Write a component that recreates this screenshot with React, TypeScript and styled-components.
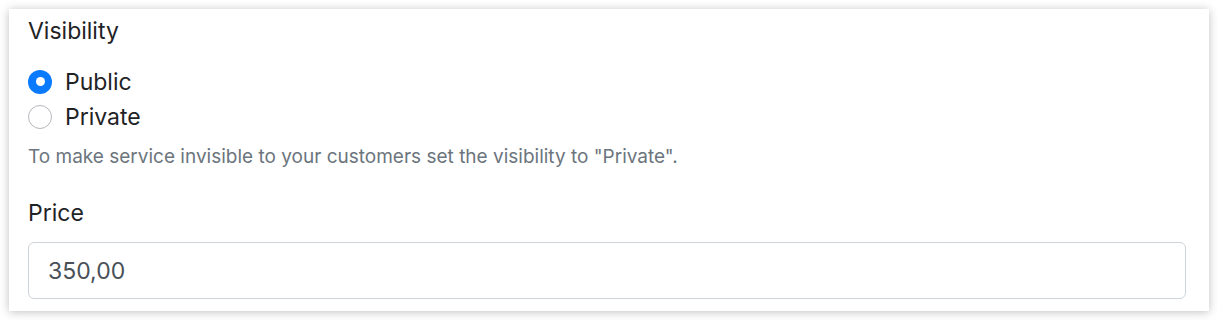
import React, { useState } from 'react'
import styled, { createGlobalStyle } from 'styled-components'

const GlobalStyle = createGlobalStyle`
    body {
        margin: 0;
        background: #ffffff;
        font-family: Inter, "Liberation Sans", sans-serif;
        color: #1f2326;
    }
`

const Page = styled.div`
    padding: 9px;
`

const Card = styled.div`
    width: 1200px;
    box-sizing: border-box;
    background: #ffffff;
    box-shadow: 0 1px 9px rgba(0, 0, 0, 0.25);
    padding: 6px 23px 12px 19px;
`

const Label = styled.div<{ $gap?: number }>`
    font-size: 23px;
    line-height: 33px;
    margin-top: ${p => p.$gap || 0}px;
`

const RadioList = styled.div`
    display: flex;
    flex-direction: column;
    margin-top: 16px;
`

const RadioRow = styled.label`
    display: flex;
    align-items: center;
    gap: 13px;
    height: 35px;
    font-size: 23px;
    cursor: pointer;
`

const RadioDot = styled.span<{ $checked: boolean }>`
    width: 24px;
    height: 24px;
    box-sizing: border-box;
    border-radius: 50%;
    flex-shrink: 0;
    background: ${p => (p.$checked ? '#0a7aff' : '#ffffff')};
    border: ${p => (p.$checked ? 'none' : '1.5px solid #b4b8bd')};
    display: flex;
    align-items: center;
    justify-content: center;
    &::after {
        content: '';
        width: 9px;
        height: 9px;
        border-radius: 50%;
        background: #ffffff;
        display: ${p => (p.$checked ? 'block' : 'none')};
    }
`

const HelpText = styled.div`
    font-size: 19px;
    line-height: 27px;
    color: #6c757d;
    margin-top: 9px;
`

const Input = styled.input`
    display: block;
    width: 100%;
    box-sizing: border-box;
    height: 57px;
    margin-top: 12px;
    padding: 0 19px;
    border: 1px solid #ced4da;
    border-radius: 6px;
    font-family: inherit;
    font-size: 23px;
    color: #495057;
    outline: none;
`

const options = ['Public', 'Private']

const App: React.FC = () => {
    const [visibility, setVisibility] = useState('Public')
    const [price, setPrice] = useState('350,00')

    return (
        <Page>
            <GlobalStyle />
            <Card>
                <Label>Visibility</Label>
                <RadioList>
                    {options.map(opt => (
                        <RadioRow key={opt} onClick={() => setVisibility(opt)}>
                            <RadioDot $checked={visibility === opt} />
                            {opt}
                        </RadioRow>
                    ))}
                </RadioList>
                <HelpText>To make service invisible to your customers set the visibility to "Private".</HelpText>
                <Label $gap={27}>Price</Label>
                <Input value={price} onChange={e => setPrice(e.target.value)} />
            </Card>
        </Page>
    )
}

export default App
